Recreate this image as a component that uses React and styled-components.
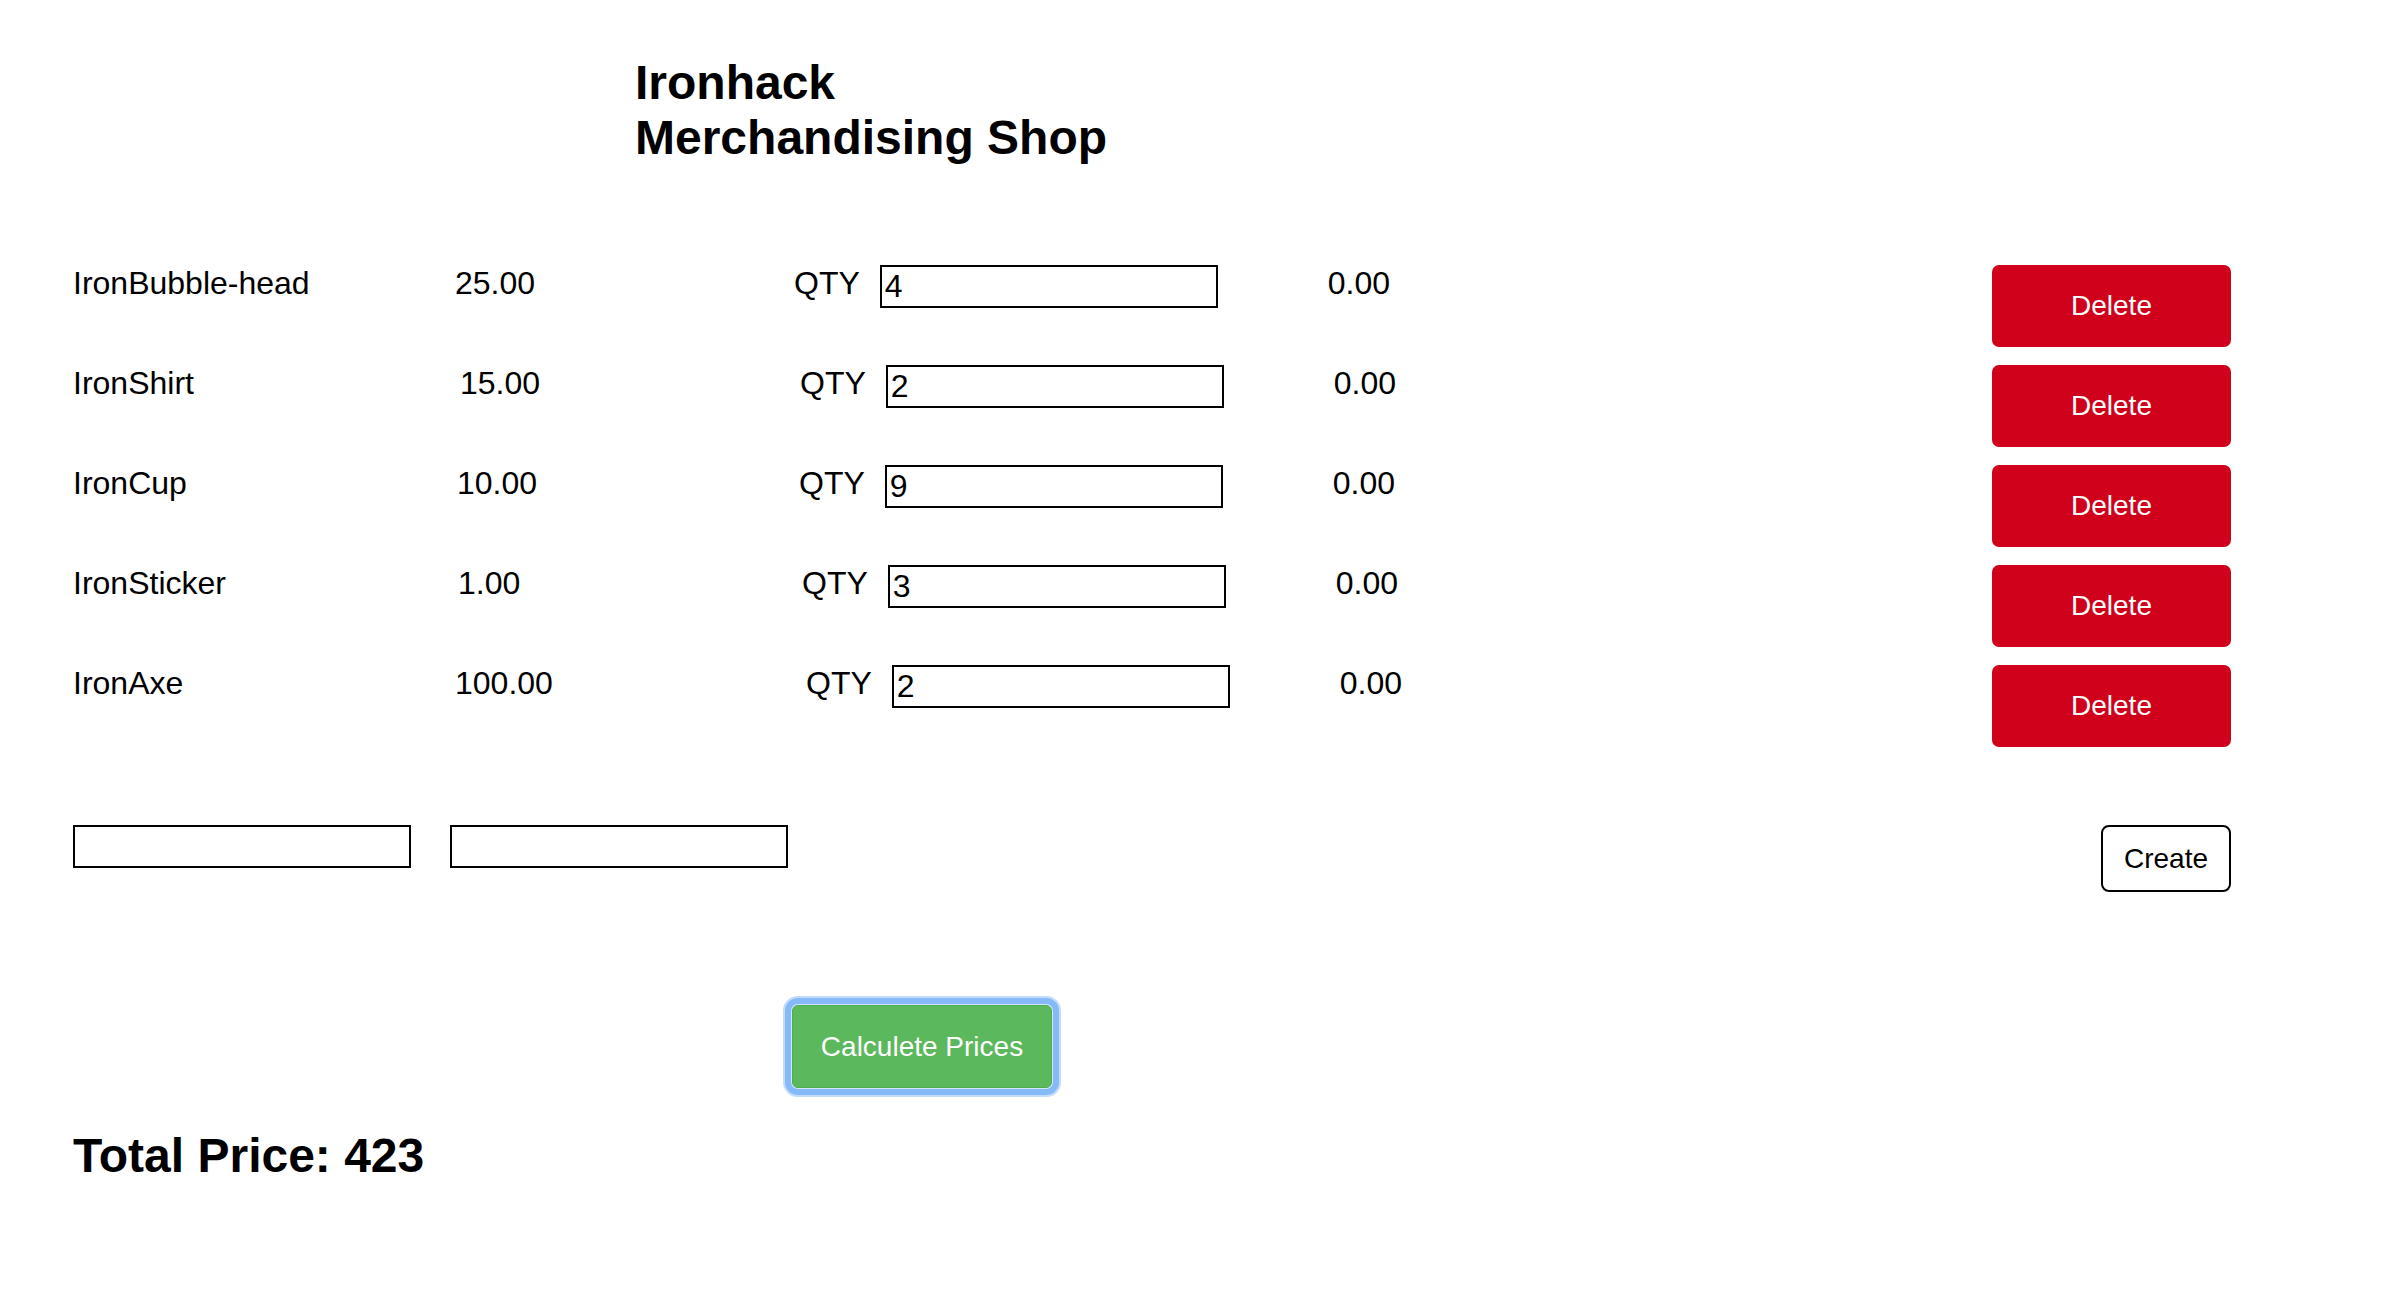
// Dependencies
import React, { useState } from 'react';
import styled, { createGlobalStyle } from 'styled-components';

const initialProducts = [
  { id: 1, name: 'IronBubble-head', price: '25.00', qty: '4', priceNudge: 0, qtyNudge: 0 },
  { id: 2, name: 'IronShirt', price: '15.00', qty: '2', priceNudge: 5, qtyNudge: 6 },
  { id: 3, name: 'IronCup', price: '10.00', qty: '9', priceNudge: 2, qtyNudge: 5 },
  { id: 4, name: 'IronSticker', price: '1.00', qty: '3', priceNudge: 3, qtyNudge: 8 },
  { id: 5, name: 'IronAxe', price: '100.00', qty: '2', priceNudge: 0, qtyNudge: 12 },
];

const ProductRow = ({ product, onDelete }) => (
  <Row>
    <Name>{product.name}</Name>
    <Price $nudge={product.priceNudge} $shift={product.qtyNudge}>
      {product.price}
    </Price>
    <QtyGroup>
      <QtyLabel>QTY</QtyLabel>
      <Input defaultValue={product.qty} />
    </QtyGroup>
    <Subtotal>0.00</Subtotal>
    <DeleteButton onClick={() => onDelete(product.id)}>Delete</DeleteButton>
  </Row>
);

const App = () => {
  const [products, setProducts] = useState(initialProducts);
  const removeProduct = id => setProducts(products.filter(p => p.id !== id));

  return (
    <Container>
      <GlobalStyle />
      <Title>
        Ironhack
        <br />
        Merchandising Shop
      </Title>
      <List>
        {products.map(product => (
          <ProductRow key={product.id} product={product} onDelete={removeProduct} />
        ))}
      </List>
      <CreateForm>
        <Input />
        <Input />
        <CreateButton>Create</CreateButton>
      </CreateForm>
      <CalculateButton autoFocus>Calculete Prices</CalculateButton>
      <Total>Total Price: 423</Total>
    </Container>
  );
};

const GlobalStyle = createGlobalStyle`
  body {
    margin: 0;
    background: #fff;
    color: #000;
    font-family: "Liberation Sans", Helvetica, Arial, sans-serif;
  }
`;

const Container = styled.div`
  display: flex;
  flex-direction: column;
  align-items: flex-start;
  padding: 55px 155px 80px 73px;
  min-height: 100vh;
  box-sizing: border-box;
`;

const Title = styled.h1`
  margin: 0 0 100px 562px;
  font-size: 48px;
  font-weight: 700;
  line-height: normal;
`;

const List = styled.div`
  display: flex;
  flex-direction: column;
  gap: 18px;
  align-self: stretch;
`;

const Row = styled.div`
  display: flex;
  align-items: flex-start;
  font-size: 32px;
  line-height: normal;
`;

const Name = styled.span`
  width: 382px;
  flex-shrink: 0;
`;

const Price = styled.span`
  width: ${({ $shift }) => 339 + $shift}px;
  padding-left: ${({ $nudge }) => $nudge}px;
  box-sizing: border-box;
  flex-shrink: 0;
`;

const QtyGroup = styled.div`
  display: flex;
  align-items: flex-start;
  gap: 20px;
`;

const QtyLabel = styled.span``;

const Input = styled.input`
  width: 338px;
  height: 43px;
  box-sizing: border-box;
  border: 2px solid #000;
  padding: 1px 3px;
  font-family: inherit;
  font-size: 32px;
  color: #000;
  background: #fff;
  outline: none;
`;

const Subtotal = styled.span`
  margin-left: 110px;
`;

const DeleteButton = styled.button`
  margin-left: auto;
  width: 239px;
  height: 82px;
  border: none;
  border-radius: 7px;
  background: #d0021b;
  color: #fff;
  font-family: inherit;
  font-size: 28px;
  cursor: pointer;
`;

const CreateForm = styled.div`
  display: flex;
  align-items: flex-start;
  gap: 39px;
  align-self: stretch;
  margin-top: 78px;
`;

const CreateButton = styled.button`
  margin-left: auto;
  width: 130px;
  height: 67px;
  border: 2px solid #000;
  border-radius: 8px;
  background: #fff;
  color: #000;
  font-family: inherit;
  font-size: 28px;
  cursor: pointer;
`;

const CalculateButton = styled.button`
  margin: 113px 0 0 719px;
  width: 260px;
  height: 83px;
  border: 1px solid #4cae4c;
  border-radius: 6px;
  background: #5cb85c;
  color: #fff;
  font-family: inherit;
  font-size: 28px;
  cursor: pointer;
  box-shadow: 0 0 0 1px #d4e6fc, 0 0 0 7px #86b9f7, 0 0 0 9px #c4dcfb;
  outline: none;
`;

const Total = styled.h2`
  margin: 40px 0 0;
  font-size: 48px;
  font-weight: 700;
  line-height: normal;
`;

export default App;
